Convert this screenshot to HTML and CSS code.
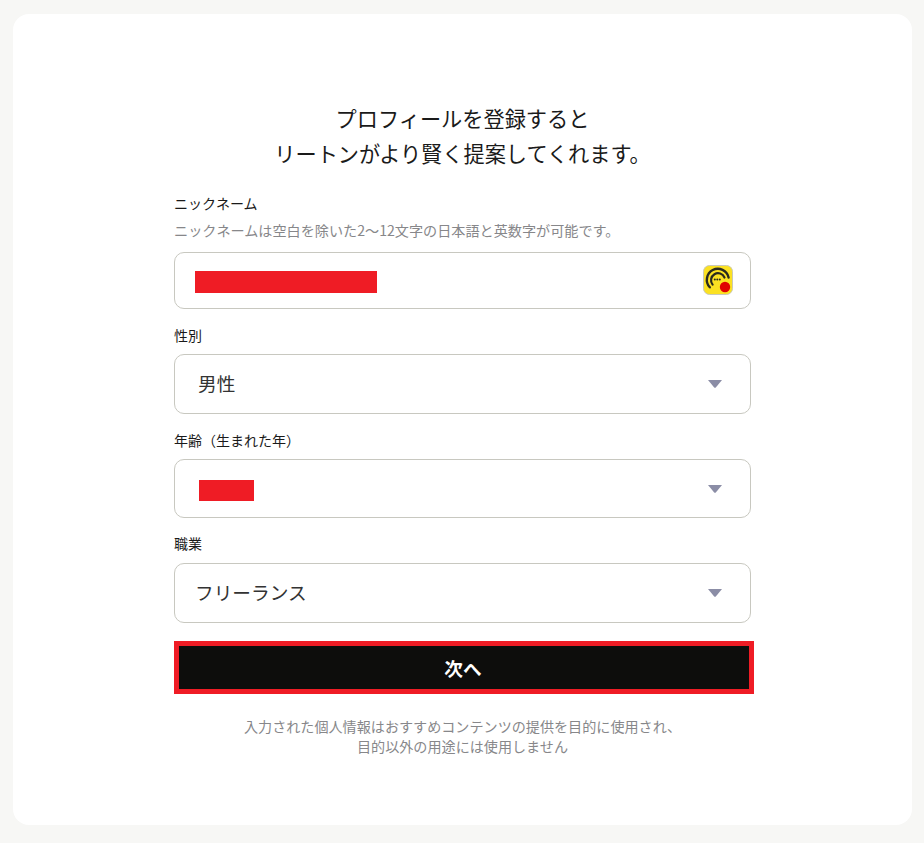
FILE: index.html
```html
<!DOCTYPE html>
<html lang="ja">
<head>
  <meta charset="UTF-8">
  <title>プロフィール登録</title>
  <link rel="stylesheet" href="styles.css">
</head>
<body>
  <main class="card">
    <h1 class="title">プロフィールを登録すると<br>リートンがより賢く提案してくれます。</h1>

    <form class="profile-form">
      <label class="field-label">ニックネーム</label>
      <p class="hint">ニックネームは空白を除いた2〜12文字の日本語と英数字が可能です。</p>
      <div class="input-box nickname">
        <span class="redact redact-name"></span>
        <svg class="app-icon" width="30" height="30" viewBox="0 0 30 30">
          <rect x="0.5" y="0.5" width="29" height="29" rx="6" fill="#fbe122" stroke="#c9c9b8"/>
          <path d="M6.8 22.3A11 11 0 1 1 25.6 12.5" fill="none" stroke="#2a2a1e" stroke-width="2.4" stroke-linecap="round"/>
          <path d="M9.6 19.6A7 7 0 1 1 21.5 12.5" fill="none" stroke="#2a2a1e" stroke-width="2.2" stroke-linecap="round"/>
          <circle cx="11.8" cy="14.5" r="1" fill="#2a2a1e"/>
          <circle cx="14.3" cy="14.5" r="1" fill="#2a2a1e"/>
          <circle cx="16.8" cy="14.5" r="1" fill="#2a2a1e"/>
          <circle cx="22" cy="22" r="5.2" fill="#e00000"/>
        </svg>
      </div>

      <label class="field-label gender-label">性別</label>
      <div class="input-box select-box gender">
        <span class="value">男性</span>
        <svg class="caret" width="14" height="8" viewBox="0 0 14 8"><path d="M0 0H14L7.8 7.4Q7 8 6.2 7.4Z" fill="#8b8da6"/></svg>
      </div>

      <label class="field-label age-label">年齢（生まれた年）</label>
      <div class="input-box select-box age">
        <span class="redact redact-age"></span>
        <svg class="caret" width="14" height="8" viewBox="0 0 14 8"><path d="M0 0H14L7.8 7.4Q7 8 6.2 7.4Z" fill="#8b8da6"/></svg>
      </div>

      <label class="field-label job-label">職業</label>
      <div class="input-box select-box job">
        <span class="value">フリーランス</span>
        <svg class="caret" width="14" height="8" viewBox="0 0 14 8"><path d="M0 0H14L7.8 7.4Q7 8 6.2 7.4Z" fill="#8b8da6"/></svg>
      </div>

      <button type="button" class="next-btn">次へ</button>
    </form>

    <p class="note">入力された個人情報はおすすめコンテンツの提供を目的に使用され、<br>目的以外の用途には使用しません</p>
  </main>
</body>
</html>
```

FILE: styles.css
```css
body {
  margin: 0;
  padding: 14px 12px 18px 13px;
  background-color: #f7f7f5;
  font-family: 'Noto Sans CJK JP', 'Noto Sans', sans-serif;
  color: #1a1a1a;
}

.card {
  height: 811px;
  box-sizing: border-box;
  padding-top: 86px;
  background-color: #ffffff;
  border-radius: 16px;
}

.title {
  margin: 0 0 23px;
  font-size: 21.2px;
  font-weight: 400;
  line-height: 35px;
  text-align: center;
}

.profile-form {
  width: 577px;
  margin-left: 161px;
}

.field-label {
  display: block;
  font-size: 14px;
  line-height: 20px;
}

.gender-label {
  margin-top: 16px;
}

.age-label {
  margin-top: 16px;
}

.job-label {
  margin-top: 15px;
}

.hint {
  margin: 7px 0 12px;
  font-size: 14.13px;
  line-height: 20px;
  color: #87878a;
}

.input-box {
  display: flex;
  align-items: center;
  box-sizing: border-box;
  margin-top: 9px;
  border: 1px solid #c8c8c0;
  border-radius: 10px;
}

.nickname {
  height: 57px;
  padding: 0 17px 0 20px;
  margin-top: 0;
  justify-content: space-between;
}

.app-icon {
  margin-bottom: 1px;
}

.select-box {
  height: 60px;
  padding: 0 28px 0 23px;
  justify-content: space-between;
  font-size: 18.67px;
  color: #333333;
}

.age {
  height: 59px;
  padding-left: 24px;
}

.job {
  margin-top: 10px;
  padding-left: 20px;
}

.value {
  margin-bottom: 4px;
}

.caret {
  margin-bottom: 1px;
}

.age .caret {
  margin-bottom: 0;
}

.redact {
  display: block;
  background-color: #ef1c25;
}

.redact-name {
  width: 182px;
  height: 22px;
  margin-top: 3px;
}

.redact-age {
  width: 55px;
  height: 21px;
  margin-top: 4px;
}

.next-btn {
  display: block;
  box-sizing: border-box;
  width: 580px;
  height: 53px;
  margin-top: 18px;
  padding-right: 8px;
  background-color: #0d0d0c;
  border: 5px solid #ef1c25;
  color: #ffffff;
  font-family: inherit;
  font-size: 18.67px;
  font-weight: 700;
}

.note {
  margin: 22px 0 0;
  font-size: 14.1px;
  line-height: 20px;
  text-align: center;
  color: #87878a;
}
```
